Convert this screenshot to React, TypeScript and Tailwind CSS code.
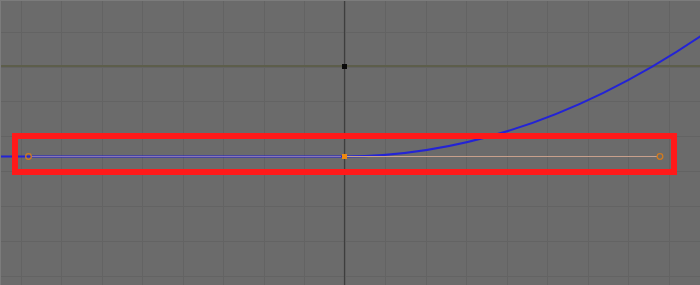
import React from 'react';

const W = 700;
const H = 285;
const originX = 344.5;
const originY = 66.5;
const stepX = 40.5;
const stepY = 34.85;

const vLines = Array.from({ length: 19 }, (_, i) => originX + (i - 9) * stepX).filter((x) => x > 0 && x < W);
const hLines = Array.from({ length: 9 }, (_, i) => originY + (i - 1) * stepY).filter((y) => y > 0 && y < H);

const App: React.FC = () => {
  return (
    <div className="w-[700px] h-[285px] bg-[#6b6b6b] overflow-hidden border-t border-l border-[#7c7c7c]">
      <svg width={W} height={H} viewBox={`0 0 ${W} ${H}`} className="block -mt-px -ml-px">
        {/* grid */}
        {vLines.map((x) => (
          <line key={'v' + x} x1={Math.round(x) + 0.5} y1={0} x2={Math.round(x) + 0.5} y2={H} stroke="#636363" strokeWidth={1} />
        ))}
        {hLines.map((y) => (
          <line key={'h' + y} x1={0} y1={Math.round(y) + 0.5} x2={W} y2={Math.round(y) + 0.5} stroke="#636363" strokeWidth={1} />
        ))}

        {/* axes */}
        <line x1={0} y1={66} x2={W} y2={66} stroke="#5d5e4b" strokeWidth={2} />
        <line x1={344.5} y1={0} x2={344.5} y2={H} stroke="#3e3e3e" strokeWidth={1.2} />
        <rect x={342} y={64} width={5} height={5} fill="#0a0a0a" />

        {/* curve */}
        <path d="M -5 156.5 L 344 156.5 Q 522 156.5 700 36.5 L 712 28.5" fill="none" stroke="#2323d6" strokeWidth={2} />

        {/* handles */}
        <line x1={31} y1={156.5} x2={341} y2={156.5} stroke="#b89aa8" strokeOpacity={0.7} strokeWidth={1} />
        <line x1={347} y1={156.5} x2={657} y2={156.5} stroke="#c8a08c" strokeWidth={1.2} />
        <circle cx={28.5} cy={156.5} r={2.8} fill="none" stroke="#d07a20" strokeWidth={1.3} />
        <circle cx={660} cy={156.5} r={2.8} fill="none" stroke="#d07a20" strokeWidth={1.3} />
        <rect x={342} y={154} width={5} height={5} fill="#ee8a10" />

        {/* highlight box */}
        <rect x={15} y={136} width={659} height={36} fill="none" stroke="#ff1a1a" strokeWidth={6} />
      </svg>
    </div>
  );
};

export default App;
